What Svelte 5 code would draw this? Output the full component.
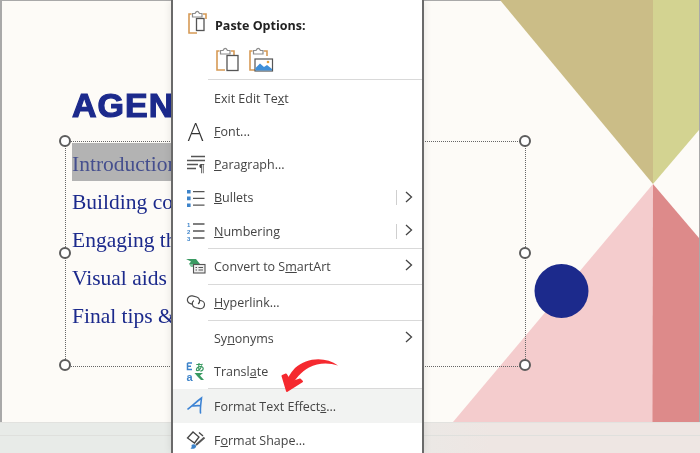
<script>
	const lines = ['Introduction', 'Building confidence', 'Engaging the audience', 'Visual aids', 'Final tips & takeaways'];
	const handles = [
		[65, 141], [525, 141], [65, 253], [525, 253], [65, 365], [525, 365]
	];
	// pre/key/post: the key letter gets the underline
	const rows = [
		{ sep: true, first: true },
		{ h: 33.4, pre: 'Exit Edit Te', key: 'x', post: 't', low: true },
		{ h: 33.4, icon: 'font', pre: '', key: 'F', post: 'ont...' },
		{ h: 33.4, icon: 'para', pre: '', key: 'P', post: 'aragraph...' },
		{ h: 33.4, icon: 'bullets', pre: '', key: 'B', post: 'ullets', more: true, split: true },
		{ h: 33.4, icon: 'numbers', pre: '', key: 'N', post: 'umbering', more: true, split: true },
		{ sep: true },
		{ h: 35, icon: 'smart', pre: 'Convert to S', key: 'm', post: 'artArt', more: true },
		{ sep: true },
		{ h: 35, icon: 'link', pre: '', key: 'H', post: 'yperlink...' },
		{ sep: true },
		{ h: 34, pre: 'Sy', key: 'n', post: 'onyms', more: true, low: true },
		{ h: 33, icon: 'translate', pre: 'Transl', key: 'a', post: 'te' },
		{ sep: true },
		{ h: 34, icon: 'effects', pre: 'Format Text Effect', key: 's', post: '...', hover: true, low: true },
		{ h: 34, icon: 'shape', pre: 'F', key: 'o', post: 'rmat Shape...', low: true }
	];
</script>

{#snippet clip(x, y)}
	<path d="M{x + 3.5} {y + 4}H{x + 1}V{y + 23}H{x + 9}M{x + 15} {y + 4}H{x + 18}V{y + 9}" fill="none" stroke="#d69a55" stroke-width="1.6" />
	<path d="M{x + 4.5} {y + 7}V{y + 3.5}H{x + 7}Q{x + 9.2} {y - 0.8} {x + 11.5} {y + 3.5}H{x + 14}V{y + 7}Z" fill="#fff" stroke="#8c8c8c" stroke-width="1.2" />
{/snippet}

<main class="stage">
	<div class="slide">
		<svg class="shapes" viewBox="0 0 700 453" aria-hidden="true">
			<polygon points="500,0 653,0 653,184" fill="#cbbd87" />
			<polygon points="653,0 699,0 699,130 653,184" fill="#d3d391" />
			<polygon points="653,184 653,422 453,422" fill="#f4cccd" />
			<polygon points="653,184 699,238 699,422 652.500,422" fill="#dd8a8a" />
			<circle cx="561.5" cy="291" r="27" fill="#1c2a8c" />
		</svg>

		<h1 class="title">AGENDA</h1>
		<div class="frame"></div>
		<ul class="agenda">
			{#each lines as line, i}
				<li class:picked={i === 0}>{line}</li>
			{/each}
		</ul>
		{#each handles as h}
			<span class="handle" style="left:{h[0]}px;top:{h[1]}px"></span>
		{/each}

		<div class="band"></div>
	</div>

	<nav class="menu">
		<div class="paste-head">
			<svg class="icon" width="24" height="24" viewBox="0 0 24 24" aria-hidden="true">
				{@render clip(2, 0)}
				<rect x="10.5" y="8.5" width="7.5" height="12" fill="#fff" stroke="#555" stroke-width="1.3" />
			</svg>
			<strong>Paste Options:</strong>
		</div>
		<div class="paste-icons">
			<svg width="26" height="26" viewBox="0 0 26 26" aria-hidden="true">
				{@render clip(1, 1)}
				<rect x="12" y="9.5" width="11" height="15" fill="#fff" stroke="#555" stroke-width="1.3" />
			</svg>
			<svg width="26" height="26" viewBox="0 0 26 26" aria-hidden="true">
				{@render clip(1, 1)}
				<rect x="7" y="13" width="17.5" height="12" fill="#fff" stroke="#555" stroke-width="1.2" />
				<path d="M7.5 24.5V22L12 17.5L16 21L19 19L24 23V24.5Z" fill="#3f8fd8" />
				<circle cx="20" cy="16" r="1.3" fill="#e0a040" />
			</svg>
		</div>

		{#each rows as row}
			{#if row.sep}
				<div class="sep" class:first={row.first}></div>
			{:else}
				<div class="row" class:hover={row.hover} style="height:{row.h}px">
					<span class="gutter">
						{#if row.icon === 'font'}
							<span class="font-a">A</span>
						{:else if row.icon === 'para'}
							<svg width="20" height="20" viewBox="0 0 20 20" aria-hidden="true">
								<path d="M5 2.500H19M1 6.500H19M1 10.500H12M1 14.500H10" fill="none" stroke="#555" stroke-width="1.3" />
								<text x="13" y="18" class="tiny-mark">¶</text>
							</svg>
						{:else if row.icon === 'bullets'}
							<svg width="20" height="20" viewBox="0 0 20 20" aria-hidden="true">
								<path d="M1 2h3.6v3.6H1zM1 8.6h3.6v3.6H1zM1 15.4h3.6V19H1z" fill="#3d83c9" />
								<path d="M7 3.700H18.500M7 10.400H18.500M7 17.200H18.500" stroke="#555" stroke-width="1.3" />
							</svg>
						{:else if row.icon === 'numbers'}
							<svg width="20" height="22" viewBox="0 0 20 22" aria-hidden="true">
								<text x="1" y="7" class="num">1</text>
								<text x="1" y="14" class="num">2</text>
								<text x="1" y="21" class="num">3</text>
								<path d="M7 4H18.500M7 11H18.500M7 18H18.500" stroke="#555" stroke-width="1.3" />
							</svg>
						{:else if row.icon === 'smart'}
							<svg width="20" height="16" viewBox="0 0 20 16" aria-hidden="true">
								<path d="M0 1H10L14 6H3L5 3.500Z" fill="#3a9a62" />
								<path d="M3 6H14L15 9H5Z" fill="#7cc49a" />
								<rect x="7.500" y="6.500" width="11.500" height="8.500" fill="#eee" stroke="#555" stroke-width="1.100" />
								<path d="M9.500 9.500H11M12.500 9.500H17M9.500 12H11M12.500 12H17" stroke="#555" stroke-width="1" />
							</svg>
						{:else if row.icon === 'link'}
							<svg width="20" height="16" viewBox="0 0 20 16" aria-hidden="true">
								<g transform="rotate(14 10 8)">
									<path d="M7 11H5A4 4 0 0 1 5 3H9.500A4 4 0 0 1 12.500 9.500" fill="none" stroke="#4a4a4a" stroke-width="1.200" />
									<path d="M13 5.500H15A4 4 0 0 1 15 13.500H10.500A4 4 0 0 1 7.500 7" fill="none" stroke="#4a4a4a" stroke-width="1.200" />
								</g>
							</svg>
						{:else if row.icon === 'translate'}
							<svg width="20" height="22" viewBox="0 0 20 22" aria-hidden="true">
								<path d="M1.500 3H6M1.500 3V9.500H6M1.500 6.300H5" fill="none" stroke="#3d83c9" stroke-width="1.500" />
								<text x="0.500" y="20.500" class="tr-a">a</text>
								<text x="9" y="11" class="tr-jp">あ</text>
								<path d="M8.500 13H17L14 15.500L18 20H15L11.500 16.500Z" fill="#3a9a62" />
							</svg>
						{:else if row.icon === 'effects'}
							<svg width="20" height="20" viewBox="0 0 20 20" aria-hidden="true">
								<path d="M2 13C6 10.500 10.500 5.500 15.500 2C15 7 14 12 14.500 17M7 10C9.500 9.600 12 9.500 14.500 9.700" fill="none" stroke="#3d83d4" stroke-width="1.600" stroke-linecap="round" />
							</svg>
						{:else if row.icon === 'shape'}
							<svg width="20" height="20" viewBox="0 0 20 20" aria-hidden="true">
								<path d="M1.500 8L7 2L13 7L8.500 13Z" fill="#fff" stroke="#444" stroke-width="1.300" />
								<path d="M13 2.500L17 6" stroke="#444" stroke-width="1.300" />
								<path d="M18.500 7.500L10 15" stroke="#555" stroke-width="2" />
								<path d="M5.500 15C8 13 11 15 10 17C9 19 6 19 4.500 18.500C5.500 18 6 17 5.500 15Z" fill="#3d83c9" />
							</svg>
						{/if}
					</span>
					<span class="label" class:low={row.low}>{row.pre}<u>{row.key}</u>{row.post}</span>
					{#if row.split}<span class="split"></span>{/if}
					{#if row.more}
						<svg class="chev" width="8" height="12" viewBox="0 0 8 12" aria-hidden="true">
							<path d="M1 1L6.500 6L1 11" fill="none" stroke="#444" stroke-width="1.300" />
						</svg>
					{/if}
				</div>
			{/if}
		{/each}
	</nav>

	<svg class="arrow" viewBox="0 0 700 453" aria-hidden="true">
		<path d="M338 365.500C326 356.500 307 357 295 368C290 373 287 379 286 384L292 385.500C295 379 301 372 309 367.500C318 362.500 329 362.500 338 365.500Z" fill="#f5292f" />
		<path d="M282.500 376L287 391L302 381.500L300 379.500L291 382.500L286 374.500Z" fill="#f5292f" stroke="#f5292f" stroke-width="2" stroke-linejoin="round" />
	</svg>
</main>

<style>
	:global(body) {
		margin: 0;
	}
	.stage {
		position: relative;
		width: 700px;
		height: 453px;
		overflow: hidden;
		font-family: "Open Sans", "Noto Sans", sans-serif;
		background: #fdfbf7;
		filter: blur(0.3px);
	}
	.slide {
		position: absolute;
		inset: 0;
		border: solid #a9a9a9;
		border-width: 1px 1px 1px 2px;
		box-sizing: border-box;
	}
	.shapes {
		position: absolute;
		left: -2px;
		top: -1px;
		width: 700px;
		height: 453px;
	}
	.title {
		position: absolute;
		left: 70px;
		top: 84px;
		margin: 0;
		font: 700 34px/40px "Liberation Sans", sans-serif;
		letter-spacing: 1px;
		color: #1c2a8c;
		-webkit-text-stroke: 1.2px #1c2a8c;
		white-space: nowrap;
	}
	.frame {
		position: absolute;
		left: 63px;
		top: 140px;
		width: 459px;
		height: 224px;
		border: 1px dotted #666;
	}
	.agenda {
		position: absolute;
		left: 70px;
		top: 142px;
		margin: 0;
		padding: 0;
		list-style: none;
		font: 21.5px/42px "Liberation Serif", serif;
		color: #1c2a8c;
		white-space: nowrap;
	}
	.agenda li {
		height: 38px;
	}
	.agenda li.picked {
		background: #b3b3b3;
		color: #454f8e;
		width: 130px;
	}
	.handle {
		position: absolute;
		width: 8px;
		height: 8px;
		margin: -7px 0 0 -8px;
		border: 2px solid #5c5c5c;
		border-radius: 50%;
		background: #fff;
	}
	.band {
		position: absolute;
		left: -2px;
		right: -1px;
		top: 421px;
		height: 31px;
		background: linear-gradient(90deg, #e8ebe8 0, #e8ebe8 50%, #eee6e3 70%);
		border-top: 1px solid #e2e2df;
		box-sizing: border-box;
	}
	.band::after {
		content: '';
		display: block;
		margin-top: 12px;
		border-top: 1px solid #dfe0dd;
	}
	.menu {
		position: absolute;
		left: 171px;
		top: 0;
		width: 253px;
		height: 453px;
		box-sizing: border-box;
		background: #fff;
		border: solid #6a6a6a;
		border-width: 0 2px;
		overflow: hidden;
		box-shadow: 0 0 8px rgba(0, 0, 0, 0.1);
		color: #444;
		font-size: 12.5px;
	}
	.paste-head {
		display: flex;
		align-items: center;
		height: 42px;
		padding: 8px 0 0 13px;
		box-sizing: border-box;
	}
	.paste-head .icon {
		width: 24px;
		margin-right: 5px;
		margin-top: -6px;
	}
	.paste-head strong {
		color: #222;
		font-size: 12.5px;
		font-weight: 700;
	}
	.paste-icons {
		display: flex;
		gap: 7px;
		height: 37px;
		padding: 4px 0 0 42px;
		box-sizing: border-box;
		align-items: flex-start;
	}
	.sep {
		height: 1px;
		margin-left: 35px;
		background: #d9d9d9;
	}
	.sep.first {
		margin-bottom: 1px;
	}
	.row {
		display: flex;
		align-items: center;
	}
	.row.hover {
		background: #f2f3f2;
	}
	.gutter {
		display: flex;
		align-items: center;
		justify-content: center;
		width: 41px;
		flex: none;
		padding-left: 4px;
		box-sizing: border-box;
	}
	.font-a {
		font-size: 26px;
		font-weight: 300;
		line-height: 20px;
		color: #333;
		font-family: "Open Sans", sans-serif;
	}
	.tiny-mark {
		font: 700 10px "Liberation Sans", sans-serif;
		fill: #444;
	}
	.num {
		font: 700 6px "Liberation Sans", sans-serif;
		fill: #3d83c9;
	}
	.tr-a {
		font: 700 11px "Liberation Sans", sans-serif;
		fill: #3d83c9;
	}
	.tr-jp {
		font: 700 9.5px "Noto Sans CJK JP", sans-serif;
		fill: #3a9a62;
	}
	.label {
		flex: 1;
		white-space: nowrap;
	}
	.label.low {
		padding-top: 2px;
	}
	.split {
		width: 1px;
		height: 15px;
		margin-right: 8px;
		background: #cfcfcf;
	}
	.chev {
		margin-right: 9px;
		margin-bottom: 2px;
	}
	.arrow {
		position: absolute;
		left: 0;
		top: 0;
		width: 700px;
		height: 453px;
		pointer-events: none;
	}
</style>
